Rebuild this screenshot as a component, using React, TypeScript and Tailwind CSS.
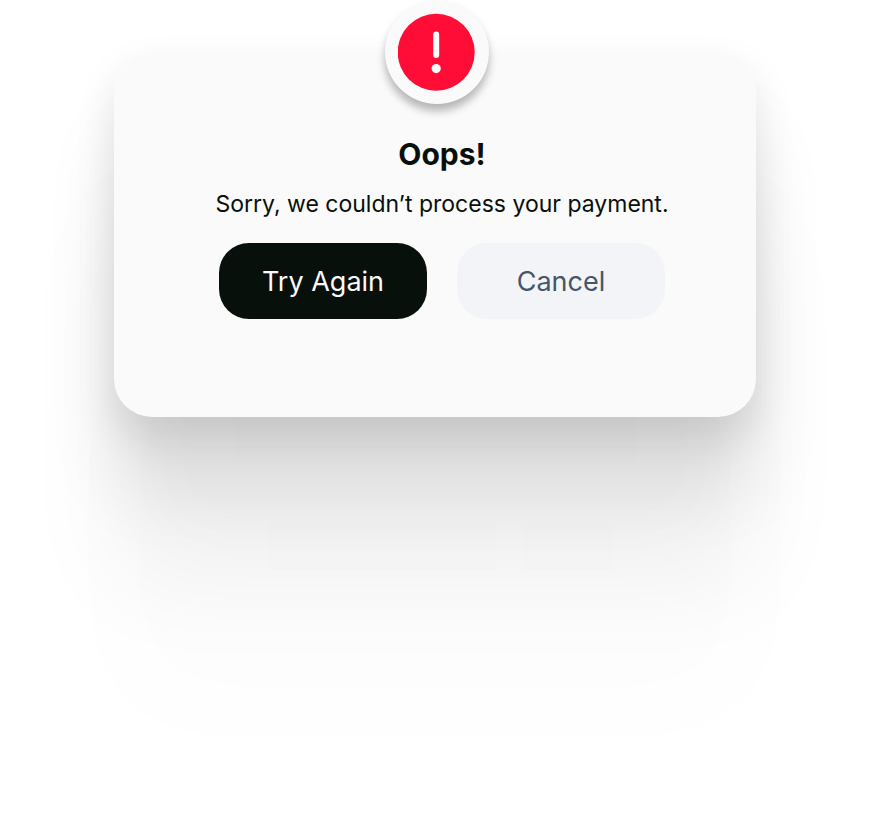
export default function App() {
  return (
    <main className="flex min-h-screen justify-center overflow-hidden bg-white font-['Inter','Liberation_Sans',sans-serif]">
      <section
        role="alertdialog"
        aria-labelledby="payment-error-title"
        aria-describedby="payment-error-text"
        className="mx-28 mt-[52px] flex w-full max-w-[642px] flex-col items-center self-start rounded-[38px] bg-[#fafafa] px-6 pb-[98px] shadow-[0_18px_40px_rgba(0,0,0,0.10),0_73px_73px_rgba(0,0,0,0.09),0_166px_100px_rgba(0,0,0,0.05),0_295px_118px_rgba(0,0,0,0.01)]"
      >
        <div className="-mt-[52px] ml-1 flex size-[104px] items-center justify-center rounded-full bg-[#fafafa] shadow-[0_7px_8px_rgba(0,0,0,0.28)]">
          <svg className="size-[78px]" viewBox="0 0 78 78" aria-hidden="true">
            <circle cx="38.2" cy="39.2" r="38.5" fill="#ff0c37" />
            <path d="M38.2 21.5v20.5" stroke="#fafafa" strokeWidth="6" strokeLinecap="round" />
            <circle cx="38.2" cy="55.6" r="4.6" fill="#fafafa" />
          </svg>
        </div>
        <div className="flex flex-col items-center pt-8 pl-3.5">
          <h1 id="payment-error-title" className="text-[30px] leading-9 font-bold text-[#07100b]">
            Oops!
          </h1>
          <p id="payment-error-text" className="mt-4 text-[23px] leading-[33px] text-[#07100b]">
            Sorry, we couldn’t process your payment.
          </p>
          <div className="mt-[22px] flex gap-[30px]">
            <button type="button" className="h-[76px] w-52 rounded-[30px] bg-[#07100b] pt-0.5 text-[27px] text-[#fafafa]">
              Try Again
            </button>
            <button type="button" className="h-[76px] w-52 rounded-[30px] bg-[#f2f4f8] pt-0.5 text-[27px] text-[#475569]">
              Cancel
            </button>
          </div>
        </div>
      </section>
    </main>
  );
}
